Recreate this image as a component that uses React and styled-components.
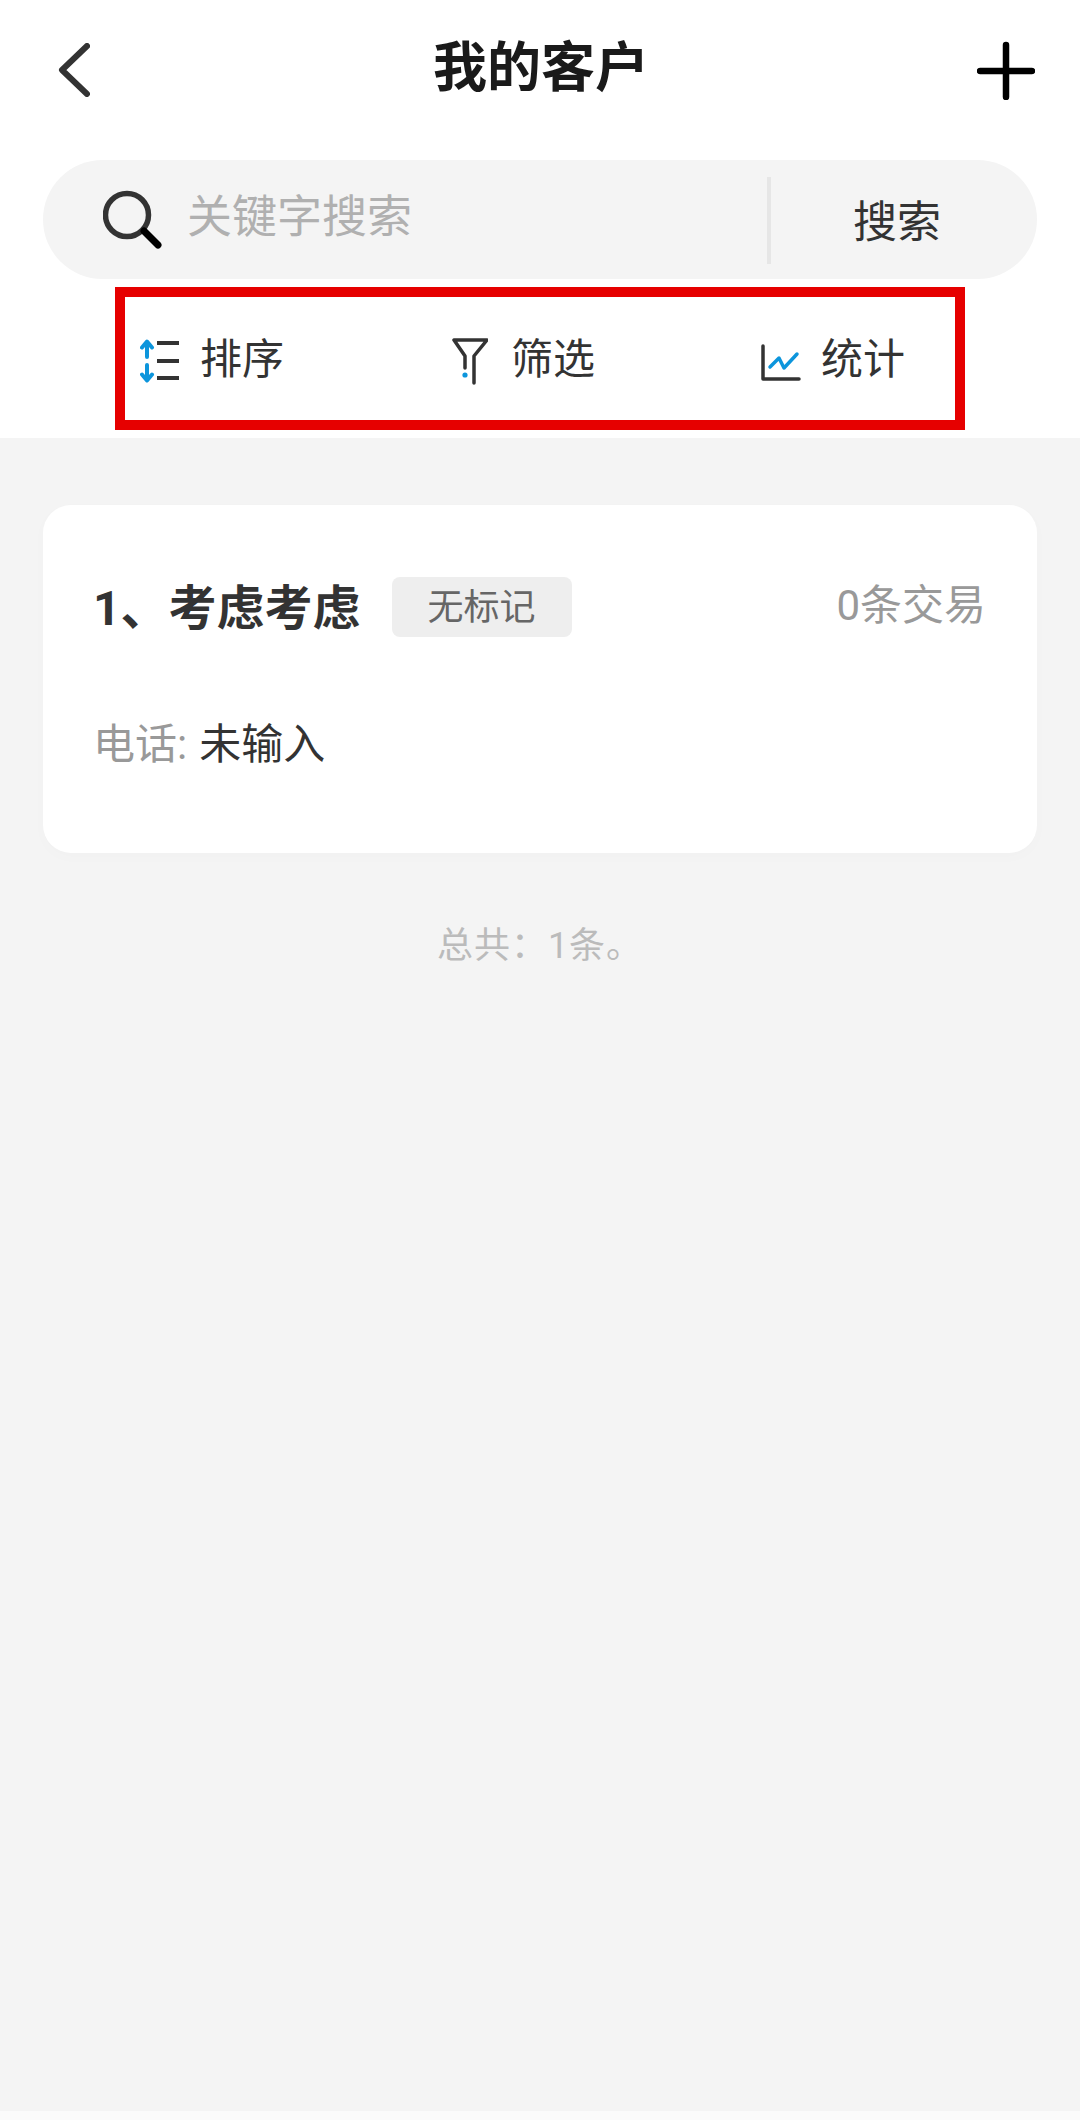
import React from 'react'
import styled, { createGlobalStyle } from 'styled-components'

const GlobalStyle = createGlobalStyle`
  html, body {
    margin: 0;
    padding: 0;
    background: #fff;
    font-family: Roboto, "Noto Sans CJK SC", "Noto Sans", sans-serif;
  }
`

const Page = styled.div`
  display: flex;
  flex-direction: column;
  width: 1080px;
  height: 2120px;
  overflow: hidden;
`

const TopSection = styled.div`
  background: #fff;
`

const Header = styled.header`
  display: flex;
  align-items: center;
  justify-content: space-between;
  height: 160px;
  padding: 0 45px 20px 58px;
  box-sizing: border-box;
`

const Title = styled.h1`
  margin: -2px 0 0 15px;
  font-size: 54px;
  line-height: 70px;
  font-weight: 700;
  color: #1a1a1a;
`

const IconButton = styled.span`
  display: flex;
  width: ${p => p.$w}px;
  height: ${p => p.$h}px;
`

const SearchBar = styled.div`
  display: flex;
  align-items: center;
  height: 119px;
  margin: 0 43px;
  padding-left: 60px;
  background: #f4f4f4;
  border-radius: 60px;
`

const Placeholder = styled.span`
  flex: 1;
  margin-left: 24px;
  margin-top: -4px;
  font-size: 45px;
  line-height: 60px;
  color: #b0b0b0;
`

const SearchButton = styled.span`
  display: flex;
  align-items: center;
  justify-content: center;
  width: 270px;
  height: 87px;
  margin-top: 1px;
  padding: 6px 14px 0 0;
  border-left: 4px solid #e6e6e6;
  box-sizing: border-box;
  font-size: 44px;
  line-height: 60px;
  color: #333;
`

const ToolbarWrap = styled.div`
  padding: 8px 115px;
`

const Toolbar = styled.div`
  display: grid;
  grid-template-columns: repeat(3, 310px);
  align-items: center;
  height: 143px;
  padding-left: 15px;
  box-sizing: border-box;
  border: 10px solid #e60000;
`

const ToolItem = styled.div`
  display: flex;
  align-items: center;
  height: 50px;
`

const ToolIcon = styled.svg`
  flex: none;
  display: block;
  margin-top: ${p => p.$top}px;
  margin-left: ${p => p.$left || 0}px;
`

const ToolLabel = styled.span`
  margin-left: ${p => p.$gap}px;
  margin-top: 3px;
  font-size: 42px;
  line-height: 50px;
  color: #333;
`

const Content = styled.main`
  flex: 1;
  padding: 67px 43px 0;
  background: #f4f4f4;
`

const Card = styled.section`
  display: flex;
  flex-direction: column;
  height: 348px;
  padding: 72px 51px 0 50px;
  box-sizing: border-box;
  background: #fff;
  border-radius: 28px;
  box-shadow: 0 4px 16px rgba(0, 0, 0, 0.015);
`

const CardTop = styled.div`
  display: flex;
  align-items: center;
  height: 60px;
`

const Name = styled.span`
  margin-top: 3px;
  font-size: 48px;
  line-height: 60px;
  font-weight: 700;
  color: #333;
`

const Tag = styled.span`
  margin-left: 31px;
  width: 180px;
  height: 60px;
  border-radius: 8px;
  background: #eee;
  font-size: 36px;
  line-height: 62px;
  text-align: center;
  color: #666;
`

const TradeCount = styled.span`
  margin-left: auto;
  margin-top: -2px;
  font-size: 42px;
  line-height: 60px;
  color: #999;
`

const PhoneRow = styled.div`
  margin-top: 78px;
  font-size: 42px;
  line-height: 60px;
  color: #333;
`

const PhoneLabel = styled.span`
  margin-right: 12px;
  color: #999;
`

const Total = styled.div`
  margin-top: 68px;
  font-size: 36px;
  letter-spacing: 1px;
  line-height: 50px;
  text-align: center;
  color: #bbb;
`

const BottomStrip = styled.div`
  height: 9px;
  background: #fbfbfb;
`

const BLUE = '#0c95dc'
const DARK = '#333'

const BackIcon = () => (
  <IconButton $w={32} $h={54}>
    <svg width="32" height="54" viewBox="0 0 32 54" fill="none">
      <polyline points="29,3 4,27 29,51" stroke={DARK} strokeWidth="6" strokeLinecap="round" strokeLinejoin="round" />
    </svg>
  </IconButton>
)

const PlusIcon = () => (
  <IconButton $w={58} $h={60}>
    <svg width="58" height="60" viewBox="0 0 58 60" fill="none">
      <path d="M3 31H55M29 5V57" stroke="#000" strokeWidth="6.5" strokeLinecap="round" />
    </svg>
  </IconButton>
)

const SearchIcon = () => (
  <IconButton $w={60} $h={60}>
    <svg width="60" height="60" viewBox="0 0 60 60" fill="none">
      <circle cx="24" cy="25" r="21.5" stroke="#333" strokeWidth="5.5" />
      <path d="M41 41L55 55" stroke="#000" strokeWidth="7" strokeLinecap="round" />
    </svg>
  </IconButton>
)

const SortIcon = () => (
  <ToolIcon $top={4} width="40" height="46" viewBox="0 0 40 46" fill="none">
    <path d="M7 19V4M2 9.5L7 3.5L12 9.5" stroke={BLUE} strokeWidth="4" strokeLinecap="round" strokeLinejoin="round" />
    <path d="M7 27V42M2 36.5L7 42.5L12 36.5" stroke={BLUE} strokeWidth="4" strokeLinecap="round" strokeLinejoin="round" />
    <path d="M17 5H39M17 23H39M17 40H39" stroke={DARK} strokeWidth="4" />
  </ToolIcon>
)

const FilterIcon = () => (
  <ToolIcon $top={4} $left={2} width="36" height="48" viewBox="0 0 36 48" fill="none">
    <path d="M13 31V19L2 3H35L22 19V46" stroke={DARK} strokeWidth="3.5" strokeLinecap="round" strokeLinejoin="round" />
    <circle cx="13" cy="38" r="2.6" fill={BLUE} />
  </ToolIcon>
)

const ChartIcon = () => (
  <ToolIcon $top={8} $left={1} width="40" height="38" viewBox="0 0 40 38" fill="none">
    <path d="M2 2V35H38" stroke={DARK} strokeWidth="3.5" strokeLinecap="round" strokeLinejoin="round" />
    <path d="M9 23L18 14L23 24L36 10" stroke={BLUE} strokeWidth="3.5" strokeLinecap="round" strokeLinejoin="round" />
  </ToolIcon>
)

const tools = [
  { label: '排序', icon: <SortIcon />, gap: 20 },
  { label: '筛选', icon: <FilterIcon />, gap: 23 },
  { label: '统计', icon: <ChartIcon />, gap: 20 },
]

export default function App() {
  return (
    <Page>
      <GlobalStyle />
      <TopSection>
        <Header>
          <BackIcon />
          <Title>我的客户</Title>
          <PlusIcon />
        </Header>
        <SearchBar>
          <SearchIcon />
          <Placeholder>关键字搜索</Placeholder>
          <SearchButton>搜索</SearchButton>
        </SearchBar>
        <ToolbarWrap>
          <Toolbar>
            {tools.map(tool => (
              <ToolItem key={tool.label}>
                {tool.icon}
                <ToolLabel $gap={tool.gap}>{tool.label}</ToolLabel>
              </ToolItem>
            ))}
          </Toolbar>
        </ToolbarWrap>
      </TopSection>
      <Content>
        <Card>
          <CardTop>
            <Name>1、考虑考虑</Name>
            <Tag>无标记</Tag>
            <TradeCount>0条交易</TradeCount>
          </CardTop>
          <PhoneRow>
            <PhoneLabel>电话:</PhoneLabel>未输入
          </PhoneRow>
        </Card>
        <Total>总共：1条。</Total>
      </Content>
      <BottomStrip />
    </Page>
  )
}
